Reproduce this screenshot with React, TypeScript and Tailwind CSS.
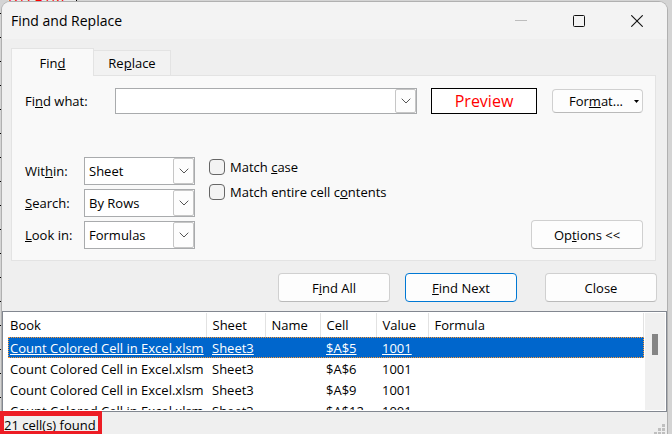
import { ReactNode, useState } from "react";

function Chevron() {
  return (
    <svg width="10" height="6" viewBox="0 0 10 6" fill="none" stroke="#555" strokeWidth="1" aria-hidden="true">
      <path d="M0.7 0.7 L5 5 L9.3 0.7" />
    </svg>
  );
}

const arrowBox =
  "flex items-center justify-center rounded-[2px] border border-[#c6c6c6] bg-[#fdfdfd]";

function Picker({ id, label, options }: { id: string; label: ReactNode; options: string[] }) {
  return (
    <div className="flex items-center">
      <label htmlFor={id} className="w-[59px]">{label}</label>
      <div className="relative w-[111px]">
        <select id={id} className="block h-7 w-full appearance-none border border-[#a9abad] bg-white pl-1 pr-6 outline-none">
          {options.map((o) => <option key={o}>{o}</option>)}
        </select>
        <span className={"pointer-events-none absolute inset-y-px right-px w-[21px] " + arrowBox}>
          <Chevron />
        </span>
      </div>
    </div>
  );
}

function Check({ id, children }: { id: string; children: ReactNode }) {
  return (
    <div className="flex items-center gap-[5px]">
      <input
        id={id}
        type="checkbox"
        className="size-4 appearance-none rounded-[4px] border border-[#666] bg-[#f3f3f3] checked:bg-[#0067c0]"
      />
      <label htmlFor={id}>{children}</label>
    </div>
  );
}

const pushButton =
  "h-[29px] w-28 shrink-0 rounded-[4px] border border-[#d0d0d0] border-b-[#bababa] bg-[#fdfdfd] text-center";

const rows = ["$A$5", "$A$6", "$A$9", "$A$12"];
const headings = ["Book", "Sheet", "Name", "Cell", "Value", "Formula"];

export default function App() {
  const [selected, setSelected] = useState(0);
  const [query, setQuery] = useState("");
  return (
    <div className="relative flex h-screen flex-col overflow-hidden bg-[#d4d4d4] pl-px pr-1 pt-px font-['Open_Sans','Noto_Sans',sans-serif] text-[13px] leading-[18px] text-black">
      <div className="absolute inset-y-0 left-0 w-[2px] bg-[repeating-linear-gradient(to_bottom,#d4d4d4_0px,#d4d4d4_13px,#000_13px,#000_14px,#d4d4d4_14px,#d4d4d4_24px)]" />
      <div className="absolute left-2 top-0 flex h-[2px] w-[69px] items-end overflow-hidden border-r border-black bg-[#e8e8e8] text-[15px] leading-[14px] text-[#f00]">
        K17E1M
      </div>

      <main className="relative flex min-h-0 flex-1 flex-col overflow-hidden rounded-t-[9px] border border-b-0 border-[#b0b0b0] bg-[#efefef]">
        <header className="flex h-[37px] shrink-0 items-center justify-between bg-[#f3f3f3] pl-[9px] pr-6">
          <h1 className="text-[14px] leading-[22px]">Find and Replace</h1>
          <div className="flex items-center gap-[46px]">
            <button aria-label="Minimize" disabled>
              <svg width="12" height="12" viewBox="0 0 12 12" stroke="#bdbdbd"><path d="M0 5.5H12" /></svg>
            </button>
            <button aria-label="Maximize">
              <svg width="12" height="12" viewBox="0 0 12 12" fill="none" stroke="#111"><rect x="0.5" y="0.5" width="11" height="11" rx="1" /></svg>
            </button>
            <button aria-label="Close window">
              <svg width="12" height="12" viewBox="0 0 12 12" stroke="#111" strokeWidth="1.1"><path d="M0.3 0.3L11.7 11.7M11.7 0.3L0.3 11.7" /></svg>
            </button>
          </div>
        </header>

        <div className="shrink-0 pl-[9px] pr-[11px] pt-[9px]">
          <div role="tablist" className="flex items-end">
            <button role="tab" aria-selected="true" className="relative -mb-px h-7 w-[83px] border border-b-0 border-[#e3e3e3] bg-[#f9f9f9]">
              Fin<u>d</u>
            </button>
            <button role="tab" aria-selected="false" className="h-[25px] w-[77px] border border-b-0 border-l-0 border-[#e3e3e3] bg-[#f2f2f2]">
              Re<u>p</u>lace
            </button>
          </div>

          <section className="border border-[#e3e3e3] bg-[#f9f9f9] pb-[11px] pl-[13px] pr-3 pt-3">
            <div className="flex items-center">
              <label htmlFor="what" className="w-[90px] shrink-0">Fi<u>n</u>d what:</label>
              <div className="flex h-[26px] flex-1 border border-[#a9abad] bg-white">
                <input id="what" value={query} onChange={(e) => setQuery(e.target.value)} className="min-w-0 flex-1 bg-transparent px-1 outline-none" />
                <button aria-label="Recent searches" className={"w-[21px] " + arrowBox}><Chevron /></button>
              </div>
              <output className="ml-[14px] flex h-[26px] w-[106px] shrink-0 items-center justify-center border border-black bg-white text-[16px] text-[#f00]">
                Preview
              </output>
              <button className="ml-[15px] flex h-6 w-[91px] shrink-0 items-center justify-end gap-[11px] rounded-[4px] border border-[#d0d0d0] border-b-[#bababa] bg-[#fdfdfd] pr-[3px]">
                <span>For<u>m</u>at...</span>
                <svg width="5" height="3" viewBox="0 0 5 3" aria-hidden="true"><path d="M0 0H5L2.5 3Z" /></svg>
              </button>
            </div>

            <div className="mt-[43px] flex gap-[14px]">
              <div className="flex flex-col gap-1">
                <Picker id="within" label={<>Wit<u>h</u>in:</>} options={["Sheet", "Workbook"]} />
                <Picker id="search" label={<><u>S</u>earch:</>} options={["By Rows", "By Columns"]} />
                <Picker id="look" label={<><u>L</u>ook in:</>} options={["Formulas", "Values", "Notes"]} />
              </div>
              <div className="flex flex-1 flex-col gap-[7px] pt-px">
                <Check id="case">Match <u>c</u>ase</Check>
                <Check id="entire">Match entire cell c<u>o</u>ntents</Check>
              </div>
              <button className={pushButton + " self-end"}>Op<u>t</u>ions &lt;&lt;</button>
            </div>
          </section>
        </div>

        <div className="flex shrink-0 justify-end pb-[9px] pr-[10px] pt-3">
          <button className={pushButton}>F<u>i</u>nd All</button>
          <button className="ml-[15px] h-[29px] w-28 shrink-0 rounded-[4px] border border-[#0078d4] bg-[#fdfdfd]"><u>F</u>ind Next</button>
          <button className={pushButton + " ml-7"}>Close</button>
        </div>

        <div className="flex min-h-0 flex-1 overflow-hidden border border-[#828790] bg-white py-px pl-[5px]">
          <div className="min-w-0 flex-1 overflow-hidden">
            <table className="w-full table-fixed border-collapse text-left">
              <colgroup>
                <col className="w-[198px]" />
                <col className="w-[59px]" />
                <col className="w-[55px]" />
                <col className="w-[56px]" />
                <col className="w-[52px]" />
                <col />
              </colgroup>
              <thead>
                <tr className="h-6">
                  {headings.map((h) => (
                    <th key={h} className="border-r border-[#e2e2e2] p-0 pl-[6px] font-normal first:pl-[2px]">{h}</th>
                  ))}
                </tr>
              </thead>
              <tbody>
                {rows.map((cell, i) => (
                  <tr
                    key={cell}
                    onClick={() => setSelected(i)}
                    className={
                      i === selected
                        ? "h-[21px] whitespace-nowrap bg-[#0066cc] text-white underline outline-1 -outline-offset-1 outline-dotted outline-[#ff9933]"
                        : "h-[21px] whitespace-nowrap"
                    }
                  >
                    <td className="p-0 pl-[2px]">Count Colored Cell in Excel.xlsm</td>
                    <td className="p-0 pl-[6px]">Sheet3</td>
                    <td />
                    <td className="p-0 pl-[6px]">{cell}</td>
                    <td className="p-0 pl-[6px]">1001</td>
                    <td />
                  </tr>
                ))}
              </tbody>
            </table>
          </div>
          <div className="ml-px mr-px w-5 bg-[#f0f0f0] pl-[7px] pt-[21px]">
            <div className="h-[21px] w-[6px] bg-[#858585]" />
          </div>
        </div>

        <footer className="flex h-[22px] shrink-0 items-end justify-between pr-[2px]">
          <span className="h-[18px] pl-[2px]">21 cell(s) found</span>
          <svg width="11" height="10" viewBox="0 0 11 10" fill="#bfbfbf" aria-hidden="true">
            <path d="M8 0h3v3h-3zM4 4h3v3h-3zM8 4h3v3h-3zM0 8h3v2h-3zM4 8h3v2h-3zM8 8h3v2h-3z" />
          </svg>
        </footer>
      </main>

      <div className="pointer-events-none absolute bottom-0 left-0 h-[23px] w-[102px] border-4 border-b-[3px] border-t-[5px] border-[#ed1c24]" />
    </div>
  );
}
